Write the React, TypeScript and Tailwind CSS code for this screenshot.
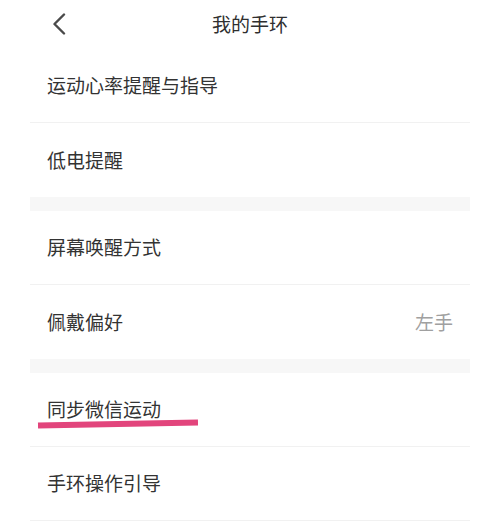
import type { ReactNode } from 'react'

const font = { fontFamily: '"Noto Sans CJK SC", "Noto Sans", sans-serif' }

function Row({
  label,
  value,
  border = true,
  children,
}: {
  label: string
  value?: string
  border?: boolean
  children?: ReactNode
}) {
  return (
    <div
      className={`relative flex h-[74px] items-center justify-between pl-[17px] pr-[17px] ${
        border ? 'border-b border-[#f1f1f1]' : ''
      }`}
    >
      <span className="text-[19px] text-[#333333]">{label}</span>
      {value && <span className="text-[19px] text-[#a0a0a0]">{value}</span>}
      {children}
    </div>
  )
}

export default function App() {
  return (
    <div className="h-[532px] w-[500px] overflow-hidden bg-white" style={font}>
      <div className="relative flex h-[49px] items-center justify-center">
        <button className="absolute left-[49px] top-[13px] flex h-[22px] w-[20px] items-center justify-center">
          <svg width="14" height="22" viewBox="0 0 14 22" fill="none">
            <polyline
              points="12,1.5 2.5,11 12,20.5"
              stroke="#4a4a4a"
              strokeWidth="2.4"
              strokeLinecap="round"
              strokeLinejoin="round"
            />
          </svg>
        </button>
        <h1 className="text-[19px] text-[#2f2f2f]">我的手环</h1>
      </div>

      <div className="mx-[30px]">
        <Row label="运动心率提醒与指导" />
        <Row label="低电提醒" border={false} />
        <div className="h-[14px] bg-[#f7f7f7]" />
        <Row label="屏幕唤醒方式" />
        <Row label="佩戴偏好" value="左手" border={false} />
        <div className="h-[14px] bg-[#f7f7f7]" />
        <Row label="同步微信运动">
          <div className="absolute left-[8px] top-[48px] h-[6px] w-[160px] -rotate-1 bg-[#e2457c]" />
        </Row>
        <Row label="手环操作引导" />
      </div>
    </div>
  )
}
